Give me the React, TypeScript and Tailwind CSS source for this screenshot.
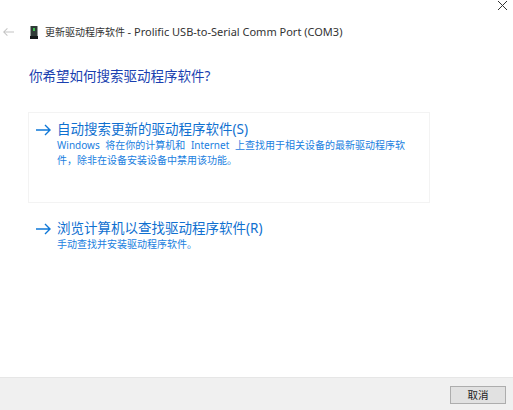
const cjk = "font-['Noto_Sans','Noto_Sans_CJK_SC',sans-serif]";

function Arrow({ className, back }: { className: string; back?: boolean }) {
  return (
    <svg width="15" height="12" viewBox="0 0 15 12" fill="none" stroke="currentColor" strokeWidth="1.4" className={className}>
      <path d={back ? "M15 6H1M6 1L1 6L6 11" : "M0 6H14M9 1L14 6L9 11"} />
    </svg>
  );
}

function DeviceIcon() {
  return (
    <svg width="8" height="13" viewBox="0 0 8 13" className="ml-[5px] mr-[7px]">
      <rect x="0.5" y="0" width="7" height="10" fill="#2f3a36" />
      <rect x="3" y="2" width="2" height="3" fill="#3fbf4f" />
      <rect x="0" y="10" width="8" height="3" fill="#15191a" />
    </svg>
  );
}

function Option({ title, children }: { title: string; children: React.ReactNode }) {
  return (
    <div className="flex">
      <Arrow className="mt-[5px] ml-[7px] mr-[6px] shrink-0 text-[#0f78d8]" />
      <div>
        <div className="text-[13.5px] leading-[20px] text-[#0f70d0]">{title}</div>
        <div className="-mt-[1px] text-[10px] leading-[15px] text-[#1a80e0] [word-spacing:3px]">{children}</div>
      </div>
    </div>
  );
}

export default function App() {
  return (
    <div className={`flex h-[410px] w-[513px] flex-col overflow-hidden bg-white ${cjk}`}>
      <div className="flex h-[377px] flex-col">
        <div className="flex h-[12px] justify-end pr-[5px] pt-[1px]">
          <svg width="11" height="11" viewBox="0 0 11 11" stroke="#333" strokeWidth="1">
            <path d="M1 0L10 9M10 0L1 9" />
          </svg>
        </div>
        <div className="mt-[13px] flex h-[14px] items-center">
          <Arrow back className="ml-[3px] mr-[11px] h-[10px] w-[11px] text-[#c4c4c4]" />
          <DeviceIcon />
          <span className="whitespace-nowrap text-[10px] text-[#333]">
            更新驱动程序软件 <span className="text-[11px]">- Prolific USB-to-Serial Comm Port (COM3)</span>
          </span>
        </div>
        <h1 className="ml-[29px] mt-[26px] text-[13.5px] font-normal leading-[22px] text-[#1a3fb0]">
          你希望如何搜索驱动程序软件?
        </h1>
        <div className="ml-[28px] mt-[25px] h-[91px] w-[402px] border border-[#f3f3f3] pt-[6px]">
          <Option title="自动搜索更新的驱动程序软件(S)">
            <div className="w-[352px]">Windows 将在你的计算机和 Internet 上查找用于相关设备的最新驱动程序软件，除非在设备安装设备中禁用该功能。</div>
          </Option>
        </div>
        <div className="ml-[28px] mt-[15px] w-[402px] pl-px">
          <Option title="浏览计算机以查找驱动程序软件(R)">手动查找并安装驱动程序软件。</Option>
        </div>
      </div>
      <div className="flex flex-1 items-start justify-end border-t border-[#e6e6e6] bg-[#f0f0f0] pr-[7px] pt-[8px]">
        <button className="h-[18px] w-[56px] border border-[#adadad] bg-[#e1e1e1] text-[10.5px] leading-none text-[#222]">
          取消
        </button>
      </div>
    </div>
  );
}
